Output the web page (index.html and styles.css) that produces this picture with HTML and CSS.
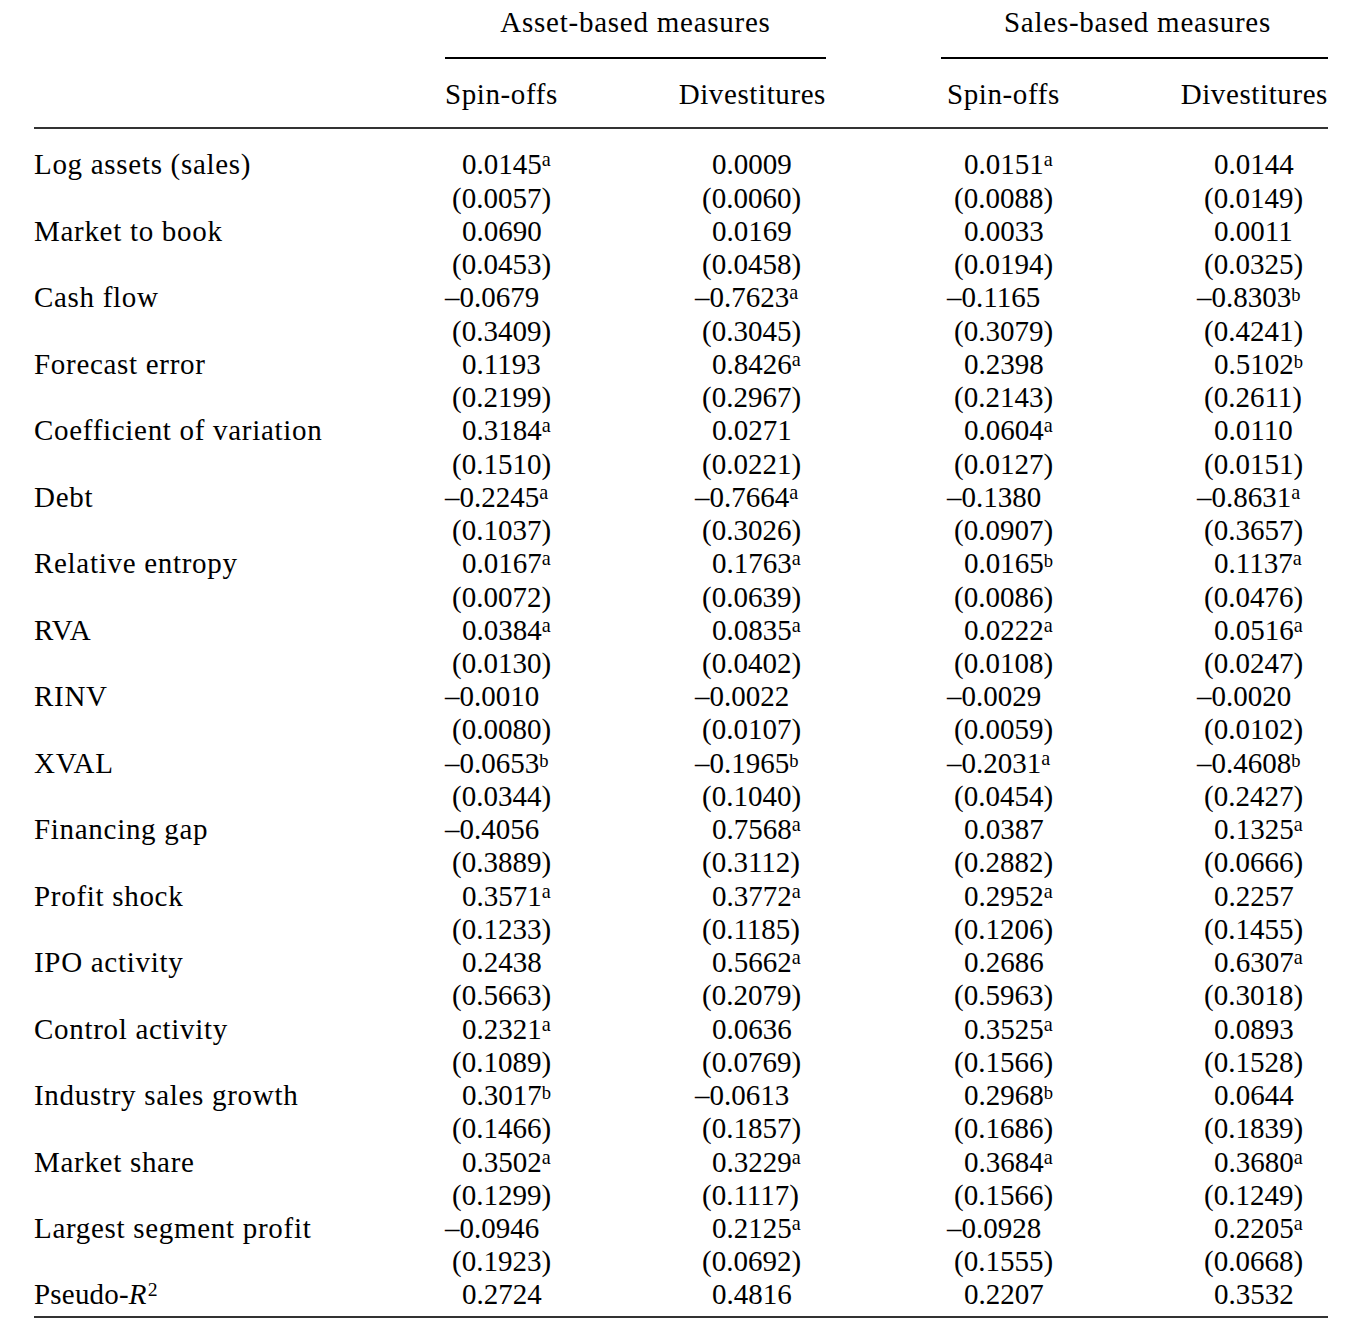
FILE: index.html
```html
<!DOCTYPE html>
<html>
<head>
<meta charset="utf-8">
<link rel="stylesheet" href="styles.css">
</head>
<body>
<div class="table">
  <div class="head-groups">
    <div></div>
    <div class="grp">Asset-based measures</div>
    <div></div>
    <div class="grp grp2">Sales-based measures</div>
  </div>
  <div class="head-sub">
    <div></div>
    <div class="pair"><span>Spin-offs</span><span>Divestitures</span></div>
    <div></div>
    <div class="pair pair2"><span>Spin-offs</span><span>Divestitures</span></div>
  </div>
  <div class="body">
    <div class="lab">Log assets (sales)</div><div class="pos">0.0145<sup>a</sup></div><div class="pos">0.0009</div><div class="pos">0.0151<sup>a</sup></div><div class="pos">0.0144</div>
    <div></div><div class="se">(0.0057)</div><div class="se">(0.0060)</div><div class="se">(0.0088)</div><div class="se">(0.0149)</div>

    <div class="lab">Market to book</div><div class="pos">0.0690</div><div class="pos">0.0169</div><div class="pos">0.0033</div><div class="pos">0.0011</div>
    <div></div><div class="se">(0.0453)</div><div class="se">(0.0458)</div><div class="se">(0.0194)</div><div class="se">(0.0325)</div>

    <div class="lab">Cash flow</div><div class="neg">&ndash;0.0679</div><div class="neg">&ndash;0.7623<sup>a</sup></div><div class="neg">&ndash;0.1165</div><div class="neg">&ndash;0.8303<sup class="b">b</sup></div>
    <div></div><div class="se">(0.3409)</div><div class="se">(0.3045)</div><div class="se">(0.3079)</div><div class="se">(0.4241)</div>

    <div class="lab">Forecast error</div><div class="pos">0.1193</div><div class="pos">0.8426<sup>a</sup></div><div class="pos">0.2398</div><div class="pos">0.5102<sup class="b">b</sup></div>
    <div></div><div class="se">(0.2199)</div><div class="se">(0.2967)</div><div class="se">(0.2143)</div><div class="se">(0.2611)</div>

    <div class="lab">Coefficient of variation</div><div class="pos">0.3184<sup>a</sup></div><div class="pos">0.0271</div><div class="pos">0.0604<sup>a</sup></div><div class="pos">0.0110</div>
    <div></div><div class="se">(0.1510)</div><div class="se">(0.0221)</div><div class="se">(0.0127)</div><div class="se">(0.0151)</div>

    <div class="lab">Debt</div><div class="neg">&ndash;0.2245<sup>a</sup></div><div class="neg">&ndash;0.7664<sup>a</sup></div><div class="neg">&ndash;0.1380</div><div class="neg">&ndash;0.8631<sup>a</sup></div>
    <div></div><div class="se">(0.1037)</div><div class="se">(0.3026)</div><div class="se">(0.0907)</div><div class="se">(0.3657)</div>

    <div class="lab">Relative entropy</div><div class="pos">0.0167<sup>a</sup></div><div class="pos">0.1763<sup>a</sup></div><div class="pos">0.0165<sup class="b">b</sup></div><div class="pos">0.1137<sup>a</sup></div>
    <div></div><div class="se">(0.0072)</div><div class="se">(0.0639)</div><div class="se">(0.0086)</div><div class="se">(0.0476)</div>

    <div class="lab">RVA</div><div class="pos">0.0384<sup>a</sup></div><div class="pos">0.0835<sup>a</sup></div><div class="pos">0.0222<sup>a</sup></div><div class="pos">0.0516<sup>a</sup></div>
    <div></div><div class="se">(0.0130)</div><div class="se">(0.0402)</div><div class="se">(0.0108)</div><div class="se">(0.0247)</div>

    <div class="lab">RINV</div><div class="neg">&ndash;0.0010</div><div class="neg">&ndash;0.0022</div><div class="neg">&ndash;0.0029</div><div class="neg">&ndash;0.0020</div>
    <div></div><div class="se">(0.0080)</div><div class="se">(0.0107)</div><div class="se">(0.0059)</div><div class="se">(0.0102)</div>

    <div class="lab">XVAL</div><div class="neg">&ndash;0.0653<sup class="b">b</sup></div><div class="neg">&ndash;0.1965<sup class="b">b</sup></div><div class="neg">&ndash;0.2031<sup>a</sup></div><div class="neg">&ndash;0.4608<sup class="b">b</sup></div>
    <div></div><div class="se">(0.0344)</div><div class="se">(0.1040)</div><div class="se">(0.0454)</div><div class="se">(0.2427)</div>

    <div class="lab">Financing gap</div><div class="neg">&ndash;0.4056</div><div class="pos">0.7568<sup>a</sup></div><div class="pos">0.0387</div><div class="pos">0.1325<sup>a</sup></div>
    <div></div><div class="se">(0.3889)</div><div class="se">(0.3112)</div><div class="se">(0.2882)</div><div class="se">(0.0666)</div>

    <div class="lab">Profit shock</div><div class="pos">0.3571<sup>a</sup></div><div class="pos">0.3772<sup>a</sup></div><div class="pos">0.2952<sup>a</sup></div><div class="pos">0.2257</div>
    <div></div><div class="se">(0.1233)</div><div class="se">(0.1185)</div><div class="se">(0.1206)</div><div class="se">(0.1455)</div>

    <div class="lab">IPO activity</div><div class="pos">0.2438</div><div class="pos">0.5662<sup>a</sup></div><div class="pos">0.2686</div><div class="pos">0.6307<sup>a</sup></div>
    <div></div><div class="se">(0.5663)</div><div class="se">(0.2079)</div><div class="se">(0.5963)</div><div class="se">(0.3018)</div>

    <div class="lab">Control activity</div><div class="pos">0.2321<sup>a</sup></div><div class="pos">0.0636</div><div class="pos">0.3525<sup>a</sup></div><div class="pos">0.0893</div>
    <div></div><div class="se">(0.1089)</div><div class="se">(0.0769)</div><div class="se">(0.1566)</div><div class="se">(0.1528)</div>

    <div class="lab">Industry sales growth</div><div class="pos">0.3017<sup class="b">b</sup></div><div class="neg">&ndash;0.0613</div><div class="pos">0.2968<sup class="b">b</sup></div><div class="pos">0.0644</div>
    <div></div><div class="se">(0.1466)</div><div class="se">(0.1857)</div><div class="se">(0.1686)</div><div class="se">(0.1839)</div>

    <div class="lab">Market share</div><div class="pos">0.3502<sup>a</sup></div><div class="pos">0.3229<sup>a</sup></div><div class="pos">0.3684<sup>a</sup></div><div class="pos">0.3680<sup>a</sup></div>
    <div></div><div class="se">(0.1299)</div><div class="se">(0.1117)</div><div class="se">(0.1566)</div><div class="se">(0.1249)</div>

    <div class="lab">Largest segment profit</div><div class="neg">&ndash;0.0946</div><div class="pos">0.2125<sup>a</sup></div><div class="neg">&ndash;0.0928</div><div class="pos">0.2205<sup>a</sup></div>
    <div></div><div class="se">(0.1923)</div><div class="se">(0.0692)</div><div class="se">(0.1555)</div><div class="se">(0.0668)</div>

    <div class="lab lab-r2">Pseudo-<i>R</i><sup class="sq">2</sup></div><div class="pos">0.2724</div><div class="pos">0.4816</div><div class="pos">0.2207</div><div class="pos">0.3532</div>
  </div>
</div>
</body>
</html>
```
FILE: styles.css
```css
html, body {
  margin: 0;
  padding: 0;
  background: #fff;
}

body {
  font-family: "Liberation Serif", "Times New Roman", serif;
  font-size: 29px;
  line-height: 33.24px;
  color: #000;
}

.table {
  width: 1294px;
  margin-left: 34px;
}

.head-groups {
  display: grid;
  grid-template-columns: 411px 381px 115px 387px;
  padding-top: 6px;
}

.grp {
  text-align: center;
  letter-spacing: 0.75px;
  padding-bottom: 18px;
  border-bottom: 2px solid #000;
}

.grp2 {
  padding-left: 6px;
}

.head-sub {
  display: grid;
  grid-template-columns: 411px 381px 115px 387px;
  padding-top: 19px;
  padding-bottom: 16px;
  border-bottom: 2px solid #333;
  letter-spacing: 0.6px;
}

.pair {
  display: flex;
  justify-content: space-between;
}

.pair2 {
  padding-left: 6px;
}

.body {
  display: grid;
  grid-template-columns: 411px 250px 252px 250px 131px;
  padding-top: 19px;
  padding-bottom: 4px;
  border-bottom: 2px solid #333;
}

.body > div {
  white-space: nowrap;
  height: 33.24px;
}

.lab {
  letter-spacing: 0.7px;
}

.lab-r2 {
  letter-spacing: 0.2px;
}

.pos {
  padding-left: 17px;
}

.neg {
  padding-left: 0;
}

.se {
  padding-left: 7px;
}

sup {
  font-size: 0.7em;
  line-height: 0;
  vertical-align: 0.4em;
  margin-left: 0;
}

sup.b {
  font-size: 0.64em;
  vertical-align: 0.3em;
}

sup.sq {
  font-size: 0.68em;
  vertical-align: 0.45em;
  margin-left: 1px;
  letter-spacing: 0;
}
```
